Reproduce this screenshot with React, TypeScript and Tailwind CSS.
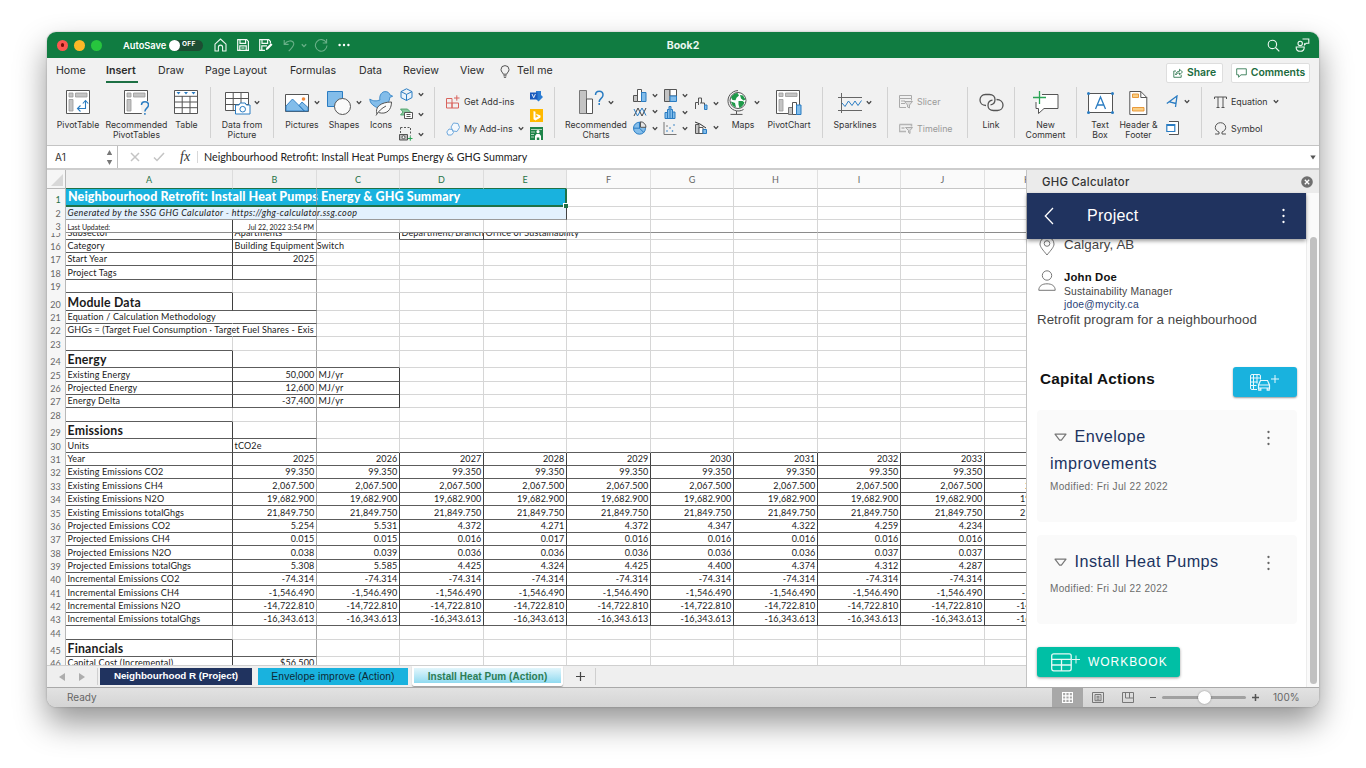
import React from "react";

const UI = "font-['Inter',sans-serif]";
const CELL = "font-['Lato',sans-serif]";
const HELV = "font-['Liberation_Sans',sans-serif]";

type Kids = { children?: React.ReactNode };

function Ic({ w, h, children, cls = "" }: Kids & { w: number; h: number; cls?: string }) {
  return (
    <svg width={w} height={h} viewBox={`0 0 ${w} ${h}`} fill="none" stroke="#555" strokeWidth="1" className={`block shrink-0 ${cls}`}>
      {children}
    </svg>
  );
}

function Chev({ color = "#444", cls = "" }: { color?: string; cls?: string }) {
  return (
    <Ic w={6} h={5} cls={cls}>
      <path d="M.8 1.2 3 3.6 5.2 1.2" stroke={color} strokeWidth="1.3" />
    </Ic>
  );
}

/* ---------- Title bar ---------- */

function TitleBar() {
  return (
    <div className={`grid h-[26px] shrink-0 grid-cols-[1fr_auto_1fr] items-center bg-[#107c41] text-white ${UI}`}>
      <div className="flex items-center">
        <div className="ml-[10px] flex gap-[6px]">
          <span className="flex size-[11px] items-center justify-center rounded-full bg-[#fc5650]"><span className="size-[3.5px] rounded-full bg-[#7a0c08]" /></span>
          <span className="size-[11px] rounded-full bg-[#fdb827]" />
          <span className="size-[11px] rounded-full bg-[#27c53e]" />
        </div>
        <span className="ml-[21px] w-[46px] pt-px text-[9.3px] font-semibold">AutoSave</span>
        <span className="flex h-[11px] w-[34px] items-center rounded-full bg-[#1d4d32] text-[6.5px] font-bold tracking-[0.3px]">
          <span className="mr-[2px] size-[11px] rounded-full bg-white" />OFF
        </span>
        <Ic w={13} h={14} cls="ml-[11px]">
          <path d="M1 6.2 6.5 1 12 6.2V13H8.6V9.2a2 2 0 0 0-4.2 0V13H1Z" stroke="#e9f5ee" strokeWidth="1.1" strokeLinejoin="round" />
        </Ic>
        <Ic w={12} h={12} cls="ml-[10px]">
          <path d="M.7.7h9l1.7 1.7v8.9H.7ZM3 .7v3.6h5.6V.7M2.8 11V6.9h6.4V11M4.3 9h3.2" stroke="#f2faf5" strokeWidth="1.2" />
        </Ic>
        <Ic w={14} h={12} cls="ml-[10px]">
          <path d="M6 11.3H.7V.7h9l1.7 1.7v2M3 .7v3.6h5.6V.7M2.8 11V6.9H8" stroke="#f2faf5" strokeWidth="1.2" />
          <path d="m6.8 11 .5-2.2 4.700-4.500 1.500 1.500-4.600 4.600Z" fill="#fff" stroke="none" />
        </Ic>
        <Ic w={12} h={13} cls="ml-[10px]">
          <path d="M1.2 1v4.400h4.400M1.500 5.200C4 1.200 9.600.8 10.700 4.200c.8 2.800-2 4.600-5 8" stroke="#69b088" strokeWidth="1.1" />
        </Ic>
        <Chev color="#69b088" cls="ml-[6px]" />
        <Ic w={14} h={14} cls="ml-[7px]">
          <path d="M12.6 1v4H8.7M12.300 4.600A5.800 5.800 0 1 0 13 7.600" stroke="#69b088" strokeWidth="1.1" />
        </Ic>
        <Ic w={12} h={4} cls="ml-[10px]">
          <g fill="#fff" stroke="none"><circle cx="1.600" cy="2" r="1.200" /><circle cx="6" cy="2" r="1.200" /><circle cx="10.400" cy="2" r="1.200" /></g>
        </Ic>
      </div>
      <div className="pt-px text-[10.5px] font-bold text-[#eaf6ef]">Book2</div>
      <div className="flex items-center justify-end pr-[9px]">
        <Ic w={13} h={13}>
          <circle cx="5.400" cy="5.400" r="4.200" stroke="#eef8f2" strokeWidth="1.1" /><path d="m8.500 8.500 3.800 3.800" stroke="#eef8f2" strokeWidth="1.1" />
        </Ic>
        <Ic w={15} h={14} cls="ml-[15px]">
          <g stroke="#eef8f2" strokeWidth="1.1"><circle cx="5.200" cy="5.400" r="2.200" /><path d="M1.200 9h8c.3 2.900-1.400 4.300-4 4.300S.9 11.900 1.200 9Z" /><path d="M7.500 1h6.300v4.300h-2.600L9.500 6.800V5.300" /></g>
        </Ic>
      </div>
    </div>
  );
}

/* ---------- Tab strip ---------- */

function RibbonTabs() {
  return (
    <div className={`flex h-[27px] shrink-0 items-center text-[10.6px] text-[#2b2b2b] ${UI}`}>
      <span className="mb-px ml-[9px] w-[50px]">Home</span>
      <span className="mr-[20px] mt-[3px] flex h-[20px] w-[32px] flex-col justify-between border-b-2 border-[#1d7044] font-semibold">Insert</span>
      <span className="mb-px w-[47px]">Draw</span>
      <span className="mb-px w-[85px]">Page Layout</span>
      <span className="mb-px w-[69px]">Formulas</span>
      <span className="mb-px w-[44px]">Data</span>
      <span className="mb-px w-[57px]">Review</span>
      <span className="mb-px w-[40px]">View</span>
      <Ic w={10} h={13}><path d="M3.200 9.200C3 7.500 1 6.800 1 4.600a4 4 0 0 1 8 0C9 6.800 7 7.500 6.800 9.200ZM3.400 10.800h3.200M3.900 12.300h2.200" stroke="#444" strokeWidth=".9" /></Ic>
      <span className="mb-px ml-[7px]">Tell me</span>
      <div className="ml-auto flex gap-[8px] pr-[9px] pt-[2px] text-[10.400px] font-semibold text-[#1c6b40]">
        <span className="flex h-[20px] w-[57px] items-center justify-center gap-[4px] rounded-[2px] border border-[#dedede] bg-white">
          <Ic w={10} h={10}><path d="M3 3H.8v6.300h7.400V6.800M2.700 7c.2-2.700 1.700-3.700 3.800-3.700V1.300l3 2.700-3 2.700V5C4.800 5 3.600 5.400 2.700 7Z" stroke="#1c6b40" strokeWidth=".8" /></Ic>
          Share
        </span>
        <span className="flex h-[20px] w-[79px] items-center justify-center gap-[4px] rounded-[2px] border border-[#dedede] bg-white">
          <Ic w={11} h={10}><path d="M.7.8h9.600v6H5L2.600 9.200V6.800H.7Z" stroke="#1c6b40" strokeWidth=".8" /></Ic>
          Comments
        </span>
      </div>
    </div>
  );
}

/* ---------- Ribbon icons ---------- */

const GRAY = "#c4c4c4";
const BLUE = "#83bdea";
const BSTROKE = "#2a7cc2";

const PivotBase = ({ children }: Kids) => (
  <Ic w={25} h={25}>
    <path d="M.5.500h23v23H.500Z" fill="#fff" />
    <path d="M3 3h4v4H3ZM9.500 3h11.500v4H9.500ZM3 9.500h4V21H3Z" fill={GRAY} stroke="#999" strokeWidth=".8" />
    {children}
  </Ic>
);

const PivotTableIcon = () => (
  <PivotBase><path d="M12 18.500h7.500V11M14.500 15.500l-3 3 3 3M16.800 13.500l2.700-3 2.700 3" stroke={BSTROKE} strokeWidth="1.1" /></PivotBase>
);
const RecPivotIcon = () => (
  <PivotBase>
    <path d="M16 11h9v14h-7z" fill="#f1f1f1" stroke="none" />
    <path d="M17.500 15c0-4.500 7-4.500 7 0 0 3.200-3.600 3-3.600 6.500M20.900 23v1.800" stroke={BSTROKE} strokeWidth="1.5" />
  </PivotBase>
);
const TableIcon = () => (
  <Ic w={25} h={25}>
    <path d="M.5.500h23v23H.500Z" fill="#fff" />
    <path d="M.5 6.300h23M.5 12h23M.5 17.700h23M8.200 6v17.500M16 6v17.500" />
    <path d="M2.500 2h4L4.500 4.500ZM10 2h4L12 4.500ZM17.500 2h4l-2 2.500Z" fill="#2a7cc2" stroke="none" />
  </Ic>
);
const DataPicIcon = () => (
  <Ic w={26} h={24}>
    <path d="M.5 1.500h23v18H.500ZM.5 7.500h23M.5 13.500h23M8.200 1.500v18M16 1.500v18" fill="#fff" />
    <path d="M10.500 14h3.500l1.200-2h5l1.200 2h3.600v9H10.500Z" fill="#fff" stroke={BSTROKE} /><circle cx="17.700" cy="18.200" r="2.800" stroke={BSTROKE} />
  </Ic>
);
const PicturesIcon = () => (
  <Ic w={24} h={18}>
    <path d="M.5.500h23v17H.500Z" fill="#fff" />
    <path d="M1 17V12l6.500-7 12 12ZM14 11.500l3-3.500 6 5.500V17h-4Z" fill={BLUE} stroke={BSTROKE} strokeWidth=".9" /><circle cx="18.500" cy="5" r="1.800" fill="#f0883a" stroke="none" />
  </Ic>
);
const ShapesIcon = () => (
  <Ic w={24} h={24}><path d="M.5.500h15v15H.500Z" fill={BLUE} stroke={BSTROKE} /><circle cx="15.500" cy="15.500" r="8" fill="#fafafa" stroke="#555" /></Ic>
);
const IconsIcon = () => (
  <Ic w={24} h={26}>
    <path d="M.8 9c3 2.300 7.200 2.300 10.200.8C10 7.500 11.500 2 15.800 1.600c2.800-.2 4.700 1.200 5 3.200l2.900 1.400-3 1.300c0 2-.6 3.500-1.700 5.500-3 5-9 6.500-13 3.500C2.500 14.500.8 12 .8 9Z" fill={BLUE} stroke={BSTROKE} strokeWidth=".8" />
    <path d="M8 24C5.500 17 12 12 22.500 12c0 8-5 13-13 10.500M7 25.500c2-4 6-7.500 10-9.500" fill="#fafafa" />
  </Ic>
);
const RecChartsIcon = () => (
  <Ic w={25} h={25}>
    <path d="M.5.500h7v23h-7Z" fill={GRAY} stroke="#777" /><path d="M7.500 9h6v14.500h-6Z" fill="#fff" />
    <path d="M16.500 5c0-5 7.500-5 7.500 0 0 3.500-3.800 3.200-3.800 7M20.200 13v2" stroke={BSTROKE} strokeWidth="1.500" />
  </Ic>
);
const MapsIcon = () => (
  <Ic w={22} h={25}>
    <circle cx="12" cy="10.500" r="8" fill="#fff" />
    <path d="M5 7.500C6.500 4.500 9 3.200 11.500 3l1.500 2.500-2.500 2.300-1 2.400-3-.2ZM14 5l3 .500 2.500 4-2 1L15 8.500ZM12.500 11l4 0 2 1.500c-1 3-3 4.800-5 5.500l-1-3.500ZM5 11.500l4 1.500 1 4.500C7 16.500 5.500 14.500 5 11.500Z" fill="#1f9a4a" stroke="none" />
    <path d="M12 .600A10.200 10.200 0 1 0 17.500 19.500M10.500 21V24M4.500 24.400h12" />
  </Ic>
);
const PivotChartIcon = () => (
  <Ic w={26} h={25}>
    <path d="M.5.500h23v23H.500Z" fill="#fff" /><path d="M3 3h4v3.500H3ZM9.500 3H21v3.500H9.500ZM3 9.500h4V21H3Z" fill={GRAY} stroke="#999" strokeWidth=".8" />
    <path d="M12.500 17.500h4v7h-4Z" fill={GRAY} stroke="#777" /><path d="M16.500 12.500h4v12h-4Z" fill="#fff" /><path d="M20.500 15h4.500v9.500h-4.500Z" fill={BLUE} stroke={BSTROKE} />
  </Ic>
);
const SparkIcon = () => (
  <Ic w={24} h={20}><path d="M0 4.500h24M0 17.500h24M3.500 0v20" stroke="#666" /><path d="m4 10 3 3.500L10.500 8l3.500 4.500L17 8l3 4.500 3.500-5" stroke={BSTROKE} /></Ic>
);
const LinkIcon = () => (
  <Ic w={25} h={19}>
    <path d="M7 12.500C3 12.500 1 10 1 7s2-5.500 5.500-5.500h4c3.500 0 5.500 2.500 5.500 5 0 3-2 5-4.500 5.300" strokeWidth="1.300" /><path d="M17.500 6.500c4 0 6.500 2.500 6.500 5.500s-2 5.500-5.500 5.500h-4C11 17.500 9 15 9 12.500c0-3 2-5 4.500-5.300" strokeWidth="1.300" />
  </Ic>
);
const CommentIcon = () => (
  <Ic w={26} h={24}><path d="M9 3.500h16v14H11l-5.500 5v-5H3V11" fill="#fff" /><path d="M0 6.500h13M6.500 0v13" stroke="#2aa455" strokeWidth="1.300" /></Ic>
);
const TextBoxIcon = () => (
  <Ic w={27} h={22}>
    <path d="M1.500 1.500h24v19h-24Z" fill="#fff" /><path d="M8.500 17 13.500 5l5 12M10.300 13h6.400" stroke={BSTROKE} strokeWidth="1.300" />
    <g fill={BSTROKE} stroke="none"><circle cx="1.500" cy="1.500" r="1.500" /><circle cx="25.500" cy="1.500" r="1.500" /><circle cx="1.500" cy="20.500" r="1.500" /><circle cx="25.500" cy="20.500" r="1.500" /></g>
  </Ic>
);
const HeaderIcon = () => (
  <Ic w={19} h={24}>
    <path d="M.8.500h11l6 6v17H.800Z" fill="#fff" /><path d="M11.800.500v6h6" />
    <path d="M3.500 3h6v3.500h-6ZM3.500 16.500H15V20H3.500Z" fill="#f9cf86" stroke="#e8912d" strokeWidth=".9" />
  </Ic>
);

const cubeI = <Ic w={13} h={13}><path d="M6.500.800 12 3.600v6l-5.500 2.900L1 9.600v-6ZM1 3.600l5.500 2.800L12 3.600M6.500 6.400v6" fill="#e9f3fb" stroke={BSTROKE} /></Ic>;
const smartI = <Ic w={13} h={12}><path d="M.5 1h7l3 3-3 3h-7l2.500-3Z" fill="#8cc9a0" stroke="#3b9a5c" strokeWidth=".8" /><path d="M4.500 4.500h8v6h-8ZM6.500 6.500h4M6.500 8.500h4" fill="#fff" /></Ic>;
const shotI = <Ic w={14} h={14}><path d="M1.500.500h10v8" strokeDasharray="2 1.500" /><path d="M1.500.500v6" strokeDasharray="2 1.500" /><path d="M.5 7.500h8V13h-8Z" fill="#bbb" /><circle cx="4.500" cy="10.200" r="1.500" fill="#fff" /><path d="M9 11.500h4.500M11.300 9.200v4.500" stroke="#2aa455" /></Ic>;
const visioI = <Ic w={13} h={13}><path d="M6 1h5v4l2 2-4.500 4.500L6 9Z" fill="#2b7cd3" stroke="none" /><path d="M0 2.500h7.500v7H0Z" fill="#185abd" stroke="none" /><path d="m2 4 1.700 3.700L5.400 4" stroke="#fff" strokeWidth=".9" /></Ic>;
const bingI = <Ic w={13} h={13}><path d="M0 0h13v13H0Z" fill="#ffb900" stroke="none" /><path d="M3.500 2 5.500 2.800v6l3-1.600L6.800 6.500 6 4.800l4.500 1.700v2L5.500 11.500l-2-1.200Z" fill="#fff" stroke="none" /></Ic>;
const peopleI = <Ic w={13} h={13}><path d="M0 0h13v13H0Z" fill="#1e8449" stroke="none" /><path d="M1 2.500h11M1 5h4M1 7.500h3M1 10h3" stroke="#cfe9d8" strokeWidth=".8" /><circle cx="8" cy="4.700" r="1.600" fill="#fff" stroke="none" /><path d="M5 13V9l1.500-2h3L11 9v4H9.300v-2.500H6.800V13Z" fill="#fff" stroke="none" /></Ic>;
const barI = <Ic w={14} h={13}><path d="M.5 6.500h4v6h-4Z" fill={GRAY} /><path d="M4.500.500h4v12h-4Z" fill="#fff" /><path d="M8.500 3.500h4.500v9H8.500Z" fill={BLUE} stroke={BSTROKE} /></Ic>;
const lineI = <Ic w={14} h={12}><path d="m1 10 4-8 4 8 4-8" stroke="#444" /><path d="m1 3 3.500 7L9 2l4 7.500" stroke={BSTROKE} /></Ic>;
const pieI = <Ic w={14} h={14}><circle cx="6.500" cy="7.200" r="6" fill={BLUE} stroke={BSTROKE} /><path d="M6.500 7.200V1.200M6.500 7.200h-6M6.500 7.200l4.300 4.300" stroke={BSTROKE} /><path d="M7.500.800a5.500 5.500 0 0 1 5.500 5.500H7.500Z" fill="#e5e5e5" /></Ic>;
const treeI = <Ic w={13} h={13}><path d="M.5.500h5.500v12H.500Z" fill={GRAY} /><path d="M6 .500h6.500V7H6Z" fill="#fff" /><path d="M6 7h6.500v5.500H6Z" fill={BLUE} stroke={BSTROKE} /></Ic>;
const histI = <Ic w={12} h={13}><path d="M1 12.500V6.500h2.500V3.500H5V.5h2v3h1.500v2.500H11v6.500ZM3.500 6v6.500M6 3v9.500M8.500 6v6.500" fill={BLUE} stroke={BSTROKE} /></Ic>;
const scatI = <Ic w={14} h={13}><path d="M1 0v12.500h12.500" stroke="#777" /><g fill={BSTROKE} stroke="none"><circle cx="4" cy="9" r=".8" /><circle cx="7" cy="6" r=".8" /><circle cx="11" cy="3" r=".8" /><circle cx="9.500" cy="9" r=".8" /></g><circle cx="4" cy="4" r=".7" fill="#555" stroke="none" /></Ic>;
const fallI = <Ic w={14} h={13}><path d="M1.500 12V5.500h3V1h3v5H6M4.500 5.500V8M7.500 1v5h3V8" /><path d="M10.500 8h2.500v4.500h-2.500Z" fill={BLUE} stroke={BSTROKE} /></Ic>;
const comboI = <Ic w={14} h={13}><path d="M1.500 3.500h3.500v9H1.500Z" fill={GRAY} /><path d="M5 6.500h4v6H5Z" fill="#fff" /><path d="M9 8.500h3.500v4H9Z" fill={BLUE} stroke={BSTROKE} /><path d="m1 1 5 2 6 4" stroke="#333" /></Ic>;

function Big({ w, icon, chev, lines, gap = "gap-[6px]" }: { w: string; icon: React.ReactNode; chev?: boolean; lines: string[]; gap?: string }) {
  return (
    <div className={`flex shrink-0 flex-col items-center ${w}`}>
      <div className={`flex h-[31px] items-center ${gap}`}>
        {icon}
        {chev && <Chev />}
      </div>
      <div className="mt-[2px] whitespace-nowrap text-center text-[8.700px] leading-[10px]">
        {lines.map((l) => <div key={l}>{l}</div>)}
      </div>
    </div>
  );
}

const Sep = () => <div className="h-[51px] w-px shrink-0 bg-[#d2d2d2]" />;

function Small({ icon, chev = true }: { icon: React.ReactNode; chev?: boolean }) {
  return <div className="flex items-center gap-[5px]"><span className="flex w-[14px] justify-center">{icon}</span>{chev && <Chev />}</div>;
}

function Line({ icon, text, chev, cls = "" }: { icon: React.ReactNode; text: string; chev?: boolean; cls?: string }) {
  return (
    <div className={`flex items-center whitespace-nowrap text-[8.900px] ${cls}`}>
      <span className="mr-[4px] flex w-[14px] justify-center">{icon}</span>{text}{chev && <Chev cls="ml-[5px]" />}
    </div>
  );
}

function Ribbon() {
  return (
    <div className={`flex h-[60px] shrink-0 items-start pt-[2px] text-[#333] ${UI}`}>
      <div className="flex w-[163px] pl-[6px]">
        <Big w="w-[50px]" icon={<PivotTableIcon />} lines={["PivotTable"]} />
        <Big w="w-[67px]" icon={<RecPivotIcon />} lines={["Recommended", "PivotTables"]} />
        <Big w="w-[33px]" icon={<TableIcon />} lines={["Table"]} />
      </div>
      <Sep />
      <Big w="w-[62px]" icon={<DataPicIcon />} chev gap="gap-[3px]" lines={["Data from", "Picture"]} />
      <Sep />
      <div className="flex w-[160px] pl-[7px]">
        <Big w="w-[42px]" icon={<PicturesIcon />} chev gap="gap-[5px]" lines={["Pictures"]} />
        <Big w="w-[42px]" icon={<ShapesIcon />} chev gap="gap-[5px]" lines={["Shapes"]} />
        <Big w="w-[32px]" icon={<IconsIcon />} lines={["Icons"]} />
        <div className="flex h-[54px] flex-col justify-between pl-[2px] pt-[1px]">
          <Small icon={cubeI} /><Small icon={smartI} /><Small icon={shotI} />
        </div>
      </div>
      <Sep />
      <div className="flex w-[119px] pl-[11px]">
        <div className="w-[84px]">
          <Line cls="h-[28px] pt-px" icon={<Ic w={14} h={14}><path d="M.5 3.500h5.500V13H.500ZM.5 8h12v5H6V8M8 3h5.500M10.800.300v5.400" stroke="#d9635c" /></Ic>} text="Get Add-ins" />
          <Line cls="h-[27px]" icon={<Ic w={14} h={14}><path d="m7.500 1 4.500.500 1.500 4L11 9.500 7 9 5 5ZM3 7l3 .500 1.500 3-2 2.500H2L.8 10Z" fill="#f3f8fd" stroke="#6fa8dc" /></Ic>} text="My Add-ins" chev />
        </div>
        <div className="flex h-[53px] flex-col justify-between pt-[3px]">{visioI}{bingI}{peopleI}</div>
      </div>
      <Sep />
      <div className="flex w-[267px] pl-[5px]">
        <Big w="w-[72px]" icon={<RecChartsIcon />} chev gap="gap-[4px]" lines={["Recommended", "Charts"]} />
        <div className="flex h-[48px] w-[29px] flex-col justify-between pl-[1px] pt-[2px]"><Small icon={barI} /><Small icon={lineI} /><Small icon={pieI} /></div>
        <div className="flex h-[48px] w-[30px] flex-col justify-between pl-[2px] pt-[2px]"><Small icon={treeI} /><Small icon={histI} /><Small icon={scatI} /></div>
        <div className="flex h-[47px] w-[31px] flex-col justify-between pl-[3px] pt-[10px]"><Small icon={fallI} /><Small icon={comboI} /></div>
        <Big w="w-[42px]" icon={<MapsIcon />} chev lines={["Maps"]} />
        <Big w="w-[50px]" icon={<PivotChartIcon />} lines={["PivotChart"]} />
      </div>
      <Sep />
      <Big w="w-[64px]" icon={<SparkIcon />} chev gap="gap-[4px]" lines={["Sparklines"]} />
      <Sep />
      <div className="w-[79px] pl-[11px] text-[#9a9a9a]">
        <Line cls="h-[28px] pt-px" icon={<Ic w={14} h={14}><path d="M.5.500h12v3h-12ZM.5 3.500v9H7M2 6h4M2 8.500h4M12.500 3.500v2" stroke="#aaa" /><path d="M5.500 6.500h8L10.500 10v3l-2-1v-2Z" fill="#ddd" stroke="#aaa" /></Ic>} text="Slicer" />
        <Line cls="h-[27px]" icon={<Ic w={14} h={11}><path d="M.5 1.500h12v2M.5 1.500v7H7M2.500 5h3" stroke="#b5b5b5" strokeWidth="1.500" /><path d="M6.500 4.500h7L11 7.500v3L9.500 9.500v-2Z" fill="#ddd" stroke="#aaa" /></Ic>} text="Timeline" />
      </div>
      <Sep />
      <Big w="w-[46px]" icon={<LinkIcon />} lines={["Link"]} />
      <Sep />
      <Big w="w-[61px]" icon={<CommentIcon />} lines={["New", "Comment"]} />
      <Sep />
      <div className="flex w-[124px] pl-[6px]">
        <Big w="w-[34px]" icon={<TextBoxIcon />} lines={["Text", "Box"]} />
        <Big w="w-[43px]" icon={<HeaderIcon />} lines={["Header &", "Footer"]} />
        <div className="flex h-[48px] flex-col justify-between pl-[5px] pt-[8px]">
          <Small icon={<Ic w={13} h={13}><path d="M.8 8.500 11 1 9.500 12M3.500 6.800 10 8.500" stroke={BSTROKE} strokeWidth="1.300" /></Ic>} />
          <Small chev={false} icon={<Ic w={13} h={14}><path d="M3 .500h9.500v13H3" fill="#fff" /><path d="M.8 3.500h8v7h-8ZM.8 4.500h8" fill="#fff" stroke={BSTROKE} strokeWidth="1.200" /></Ic>} />
        </div>
      </div>
      <Sep />
      <div className="pl-[11px]">
        <Line cls="h-[28px] pt-px" icon={<Ic w={13} h={12}><path d="M.5 3V1h12v2M4 1v10.500M2.500 11.500h3M9 1v10.500M7.500 11.500h3" /></Ic>} text="Equation" chev />
        <Line cls="h-[27px]" icon={<Ic w={13} h={13}><path d="M1 12h4V10C2.500 9 1.300 7.500 1.300 5.500a5.200 4.800 0 0 1 10.400 0C11.700 7.500 10.500 9 8 10v2h4" /></Ic>} text="Symbol" />
      </div>
    </div>
  );
}

/* ---------- Formula bar ---------- */

function FormulaBar() {
  return (
    <div className="flex h-[25px] shrink-0 items-center border-b-2 border-t border-b-[#cdcdcd] border-t-[#c4c4c4] bg-white">
      <div className={`flex h-full w-[71px] items-center justify-between border-r border-[#bdbdbd] pl-[8px] pr-[4px] text-[10px] tracking-[0.200px] text-[#333] ${UI}`}>
        A1
        <Ic w={7} h={15}><path d="M3.500 0 6.200 5H.800ZM3.500 15 6.200 10H.800Z" fill="#777" stroke="none" /></Ic>
      </div>
      <Ic w={10} h={10} cls="ml-[12px]"><path d="m1 1 8 8M9 1 1 9" stroke="#c4c4c4" strokeWidth="1.500" /></Ic>
      <Ic w={12} h={10} cls="ml-[13px]"><path d="m1 5.500 3 3 7-7.500" stroke="#c4c4c4" strokeWidth="1.500" /></Ic>
      <span className="ml-[15px] w-[17px] font-['Liberation_Serif',serif] text-[14px] italic leading-none text-[#333]">fx</span>
      <span className="h-[12px] w-px bg-[#d8d8d8]" />
      <span className={`ml-[6px] whitespace-nowrap text-[10.700px] text-[#222] ${CELL}`}>Neighbourhood Retrofit: Install Heat Pumps Energy &amp; GHG Summary</span>
      <Ic w={6} h={5} cls="ml-auto mr-[3px]"><path d="M.3.500h5.400L3 4.500Z" fill="#555" stroke="none" /></Ic>
    </div>
  );
}

/* ---------- Sheet ---------- */

const COLS = "ABCDEFGHIJK".split("");
const COL_W = [167, 84, 83, 84, 83, 84, 83, 84, 83, 84, 85];
const DARK = "#5c5c5c";
const LITE = "#d6d6d6";
const FREEZE = "#a3a3a3";

type Row = { n: number; h: number; t?: string[]; head?: boolean; dr?: number[]; db?: number; hide?: number[]; clip?: boolean };

const same = (label: string, v: string) => [label, ...Array(10).fill(v)];
const ALL = [0, 2, 3, 4, 5, 6, 7, 8, 9];

const ROWS: Row[] = [
  { n: 15, h: 7, t: ["Subsector", "Apartments", "", "Department/Branch", "Office of Sustainability"], dr: [0, 2, 3], db: 2, clip: true },
  { n: 16, h: 13, t: ["Category", "Building Equipment Switch"], dr: [0], db: 2 },
  { n: 17, h: 13, t: ["Start Year", "2025"], dr: [0], db: 2 },
  { n: 18, h: 14, t: ["Project Tags"], dr: [0], db: 2 },
  { n: 19, h: 13, db: 1 },
  { n: 20, h: 18, t: ["Module Data"], head: true, dr: [0], db: 2 },
  { n: 21, h: 13, t: ["Equation / Calculation Methodology"], db: 2, hide: [0] },
  { n: 22, h: 13, t: ["GHGs = (Target Fuel Consumption · Target Fuel Shares - Exis"], db: 2, hide: [0] },
  { n: 23, h: 14, db: 1 },
  { n: 24, h: 17, t: ["Energy"], head: true, dr: [0], db: 3 },
  { n: 25, h: 14, t: ["Existing Energy", "50,000", "MJ/yr"], dr: [0, 2], db: 3 },
  { n: 26, h: 13, t: ["Projected Energy", "12,600", "MJ/yr"], dr: [0, 2], db: 3 },
  { n: 27, h: 13, t: ["Energy Delta", "-37,400", "MJ/yr"], dr: [0, 2], db: 3 },
  { n: 28, h: 14, db: 1 },
  { n: 29, h: 17, t: ["Emissions"], head: true, dr: [0], db: 2 },
  { n: 30, h: 14, t: ["Units", "tCO2e"], dr: [0], db: 11 },
  { n: 31, h: 13, t: ["Year", "2025", "2026", "2027", "2028", "2029", "2030", "2031", "2032", "2033"], dr: ALL, db: 11 },
  { n: 32, h: 13, t: same("Existing Emissions CO2", "99.350"), dr: ALL, db: 11 },
  { n: 33, h: 14, t: same("Existing Emissions CH4", "2,067.500"), dr: ALL, db: 11 },
  { n: 34, h: 13, t: same("Existing Emissions N2O", "19,682.900"), dr: ALL, db: 11 },
  { n: 35, h: 14, t: same("Existing Emissions totalGhgs", "21,849.750"), dr: ALL, db: 11 },
  { n: 36, h: 13, t: ["Projected Emissions CO2", "5.254", "5.531", "4.372", "4.271", "4.372", "4.347", "4.322", "4.259", "4.234"], dr: ALL, db: 11 },
  { n: 37, h: 13, t: ["Projected Emissions CH4", "0.015", "0.015", "0.016", "0.017", "0.016", "0.016", "0.016", "0.016", "0.016"], dr: ALL, db: 11 },
  { n: 38, h: 14, t: ["Projected Emissions N2O", "0.038", "0.039", "0.036", "0.036", "0.036", "0.036", "0.036", "0.037", "0.037"], dr: ALL, db: 11 },
  { n: 39, h: 13, t: ["Projected Emissions totalGhgs", "5.308", "5.585", "4.425", "4.324", "4.425", "4.400", "4.374", "4.312", "4.287"], dr: ALL, db: 11 },
  { n: 40, h: 13, t: same("Incremental Emissions CO2", "-74.314"), dr: ALL, db: 11 },
  { n: 41, h: 14, t: same("Incremental Emissions CH4", "-1,546.490"), dr: ALL, db: 11 },
  { n: 42, h: 13, t: same("Incremental Emissions N2O", "-14,722.810"), dr: ALL, db: 11 },
  { n: 43, h: 13, t: same("Incremental Emissions totalGhgs", "-16,343.613"), dr: ALL, db: 11 },
  { n: 44, h: 14, db: 1 },
  { n: 45, h: 17, t: ["Financials"], head: true, dr: [0], db: 2 },
  { n: 46, h: 13, t: ["Capital Cost (Incremental)", "$56,500"], dr: [0], db: 2 },
];

function RowNum({ n, green }: { n: number; green?: boolean }) {
  return (
    <div className={`flex w-[19px] shrink-0 items-end justify-end border-r border-[#b8b8b8] bg-[#f6f6f6] pr-[4px] text-[9px] leading-[12px] tracking-[0.200px] ${CELL} ${green ? "pb-px text-[#1f7246]" : "text-[#666]"}`}>{n}</div>
  );
}

function SheetRow({ r }: { r: Row }) {
  return (
    <div className={`flex shrink-0 ${r.clip ? "overflow-hidden" : ""}`} style={{ height: r.h }}>
      <RowNum n={r.n} />
      {COLS.map((c, i) => {
        const v = r.t?.[i] ?? "";
        const num = /^[-$]?[\d.,]+$/.test(v);
        const right = r.hide?.includes(i) ? "transparent" : i === 1 ? FREEZE : r.dr?.includes(i) ? "#3f3f3f" : LITE;
        return (
          <div
            key={c}
            className={`flex shrink-0 items-end whitespace-nowrap border-b border-r pl-[1.500px] pr-[1.500px] text-[#1a1a1a] ${CELL} ${num ? "justify-end" : ""} ${r.clip && i === 3 ? "overflow-hidden" : ""} ${r.head ? "text-[12.300px] font-bold leading-[15px] tracking-[0.200px]" : "text-[9px] leading-[12px] tracking-[0.160px]"}`}
            style={{ width: COL_W[i], borderBottomColor: i < (r.db ?? 0) || (r.clip && (i === 3 || i === 4)) ? DARK : LITE, borderRightColor: right }}
          >
            {v}
          </div>
        );
      })}
    </div>
  );
}

function Fillers({ from, bottom = "border-[#d6d6d6]" }: { from: number; bottom?: string }) {
  return <>{COLS.slice(from).map((c, i) => <div key={c} className={`shrink-0 border-b border-r border-r-[#d6d6d6] ${bottom}`} style={{ width: COL_W[i + from] }} />)}</>;
}

function Sheet() {
  return (
    <div className="flex min-h-0 w-[979px] flex-1 flex-col overflow-hidden bg-white">
      <div className={`flex h-[19px] shrink-0 text-[9px] ${CELL}`}>
        <div className="flex w-[19px] shrink-0 items-end justify-end border-b border-r border-[#b8b8b8] bg-[#f6f6f6] pb-[2px] pr-[2px]">
          <Ic w={12} h={12}><path d="M12 0v12H0Z" fill="#d8d8d8" stroke="none" /></Ic>
        </div>
        {COLS.map((c, i) => (
          <div key={c} className={`flex shrink-0 items-center justify-center border-b border-r pt-px ${i < 5 ? "border-b-[#1f7246] border-r-[#dcdcdc] bg-[#f0f0f0] text-[#1f7246]" : "border-b-[#c6c6c6] border-r-[#e0e0e0] bg-[#fafafa] text-[#666]"}`} style={{ width: COL_W[i] }}>{c}</div>
        ))}
      </div>
      <div className="flex h-[18px] shrink-0">
        <RowNum n={1} green />
        <div className={`relative flex w-[501px] shrink-0 items-center whitespace-nowrap border-b-2 border-r-2 border-[#1f7246] bg-[#19b2de] pl-[2px] pt-px text-[12.500px] font-black tracking-[0.110px] text-white ${CELL}`}>
          Neighbourhood Retrofit: Install Heat Pumps Energy &amp; GHG Summary
          <span className="absolute left-[250px] top-0 h-[16px] w-px bg-[#7f9fae]" />
          <span className="absolute -bottom-[3px] -right-[3px] z-10 size-[5px] border-l border-t border-white bg-[#1f7246]" />
        </div>
        <Fillers from={5} />
      </div>
      <div className="flex h-[13px] shrink-0">
        <RowNum n={2} />
        <div className={`relative flex w-[501px] shrink-0 items-center whitespace-nowrap border-b border-r border-b-[#9a9a9a] border-r-[#444] bg-[#e3f1fd] pl-[1.500px] text-[9px] italic tracking-[0.370px] text-[#222] ${CELL}`}>
          Generated by the SSG GHG Calculator - https://ghg-calculator.ssg.coop
          <span className="absolute left-[250px] top-0 h-[13px] w-px bg-[#a3a3a3]" />
        </div>
        <Fillers from={5} />
      </div>
      <div className={`flex h-[13px] shrink-0 text-[7px] text-[#222] ${CELL}`}>
        <RowNum n={3} />
        <div className="flex w-[167px] shrink-0 items-center border-b border-r border-b-[#8c8c8c] border-r-[#3f3f3f] pl-[1.500px] pt-[2px]">Last Updated:</div>
        <div className="flex w-[84px] shrink-0 items-center justify-end whitespace-nowrap border-b border-r border-b-[#8c8c8c] border-r-[#a3a3a3] pr-[2px] pt-[2px]">Jul 22, 2022 3:54 PM</div>
        <Fillers from={2} bottom="border-b-[#8c8c8c]" />
      </div>
      {ROWS.map((r) => <SheetRow key={r.n} r={r} />)}
    </div>
  );
}

function SheetTabs() {
  return (
    <div className={`flex h-[22px] shrink-0 items-center border-t border-[#cfcfcf] bg-[#efefef] text-[9.800px] ${HELV}`}>
      <Ic w={28} h={10} cls="ml-[12px]"><path d="M6 1v8L0 5ZM20 1v8l6-4Z" fill="#adadad" stroke="none" /></Ic>
      <span className="ml-[10px] h-[17px] w-px bg-[#d0d0d0]" />
      <span className="ml-[2px] mr-[6px] flex h-[17px] w-[152px] items-center justify-center bg-[#20335f] font-bold text-white"><span className="tracking-[-0.040px]">Neighbourhood R (Project)</span></span>
      <span className="flex h-[17px] w-[150px] items-center justify-center bg-[#19b2de] text-[10.300px] tracking-[0.100px] text-[#0d2a36]">Envelope improve (Action)</span>
      <span className="mb-[2px] ml-[4px] flex h-[20px] w-[151px] items-center justify-center rounded-b-[2px] bg-white shadow-[0_1px_1px_rgba(0,0,0,0.350)]">
        <span className="flex h-[15px] w-[147px] items-center justify-center bg-linear-to-b from-[#e2f6fc] to-[#8fdaf0] pt-px text-[10px] font-bold tracking-[0.050px] text-[#2c7d55]">Install Heat Pum (Action)</span>
      </span>
      <Ic w={9} h={9} cls="ml-[13px]"><path d="M4.500 0v9M0 4.500h9" stroke="#444" strokeWidth="1.200" /></Ic>
      <span className="ml-[10px] h-[17px] w-px bg-[#cfcfcf]" />
    </div>
  );
}

/* ---------- Add-in pane ---------- */

const Dots = ({ color }: { color: string }) => (
  <Ic w={3} h={16}><g fill={color} stroke="none"><circle cx="1.500" cy="2" r="1.150" /><circle cx="1.500" cy="8" r="1.150" /><circle cx="1.500" cy="14" r="1.150" /></g></Ic>
);

const Tri = () => <Ic w={13} h={9} cls="mr-[8px] inline-block"><path d="M1 1.200h11L7.400 7.200H5.600Z" stroke="#777" strokeWidth="1.200" strokeLinejoin="round" /></Ic>;

function Card({ title, h, gap }: { title: React.ReactNode; h: string; gap: string }) {
  return (
    <div className={`flex rounded-[4px] bg-[#fafafa] pl-[13px] pr-[27px] pt-[13px] ${h}`}>
      <div className="flex-1">
        <div className="text-[16.200px] leading-[27px] tracking-[0.460px] text-[#20335f]"><span className="inline-block w-[3.500px]" /><Tri />{title}</div>
        <div className={`text-[10px] leading-[12px] tracking-[0.340px] text-[#6b6b6b] ${gap}`}>Modified: Fri Jul 22 2022</div>
      </div>
      <div className="pt-[7px]"><Dots color="#666" /></div>
    </div>
  );
}

function Pane() {
  return (
    <div className="flex w-[293px] shrink-0 flex-col border-l border-[#c4c4c4] bg-white">
      <div className={`flex h-[23px] shrink-0 items-center justify-between bg-[#ebebeb] pl-[15px] pr-[6px] pt-px text-[11.300px] font-medium tracking-[0.300px] text-[#333] ${UI}`}>
        GHG Calculator
        <Ic w={12} h={12}><circle cx="6" cy="6" r="5.800" fill="#6f6f6f" stroke="none" /><path d="m3.800 3.800 4.400 4.400M8.200 3.800 3.800 8.200" stroke="#fff" strokeWidth="1.300" /></Ic>
      </div>
      <div className={`flex min-h-0 flex-1 ${HELV}`}>
        <div className="flex w-[279px] flex-col">
          <div className="z-10 flex h-[46px] shrink-0 items-center bg-[#20335f] pl-[17px] pr-[21px] text-[16px] text-white shadow-[0_2px_4px_rgba(0,0,0,0.400)]">
            <Ic w={10} h={18}><path d="M9 1 1.300 9 9 17" stroke="#fff" strokeWidth="1.300" /></Ic>
            <span className="ml-[33px] flex-1 tracking-[0.250px]">Project</span>
            <Dots color="#fff" />
          </div>
          <div className="flex min-h-0 flex-1 flex-col pl-[10px] pr-[9px] text-[#444]">
            <div className="-mt-[3px] flex h-[20px] items-center">
              <Ic w={16} h={20} cls="ml-[2px]"><path d="M8 19C4 14 1 11 1 8a7 7 0 0 1 14 0c0 3-3 6-7 11Z" stroke="#777" /><circle cx="8" cy="7.500" r="2.800" stroke="#777" /></Ic>
              <span className="ml-[9px] pb-[3px] text-[13.300px] tracking-[0.100px]">Calgary, AB</span>
            </div>
            <div className="mt-[14px] flex">
              <Ic w={18} h={21} cls="ml-[1px]"><circle cx="9" cy="5.500" r="4.700" stroke="#777" /><path d="M.8 20.300c0-4.500 3.500-6.500 8.200-6.500s8.200 2 8.200 6.500Z" stroke="#777" /></Ic>
              <div className="ml-[8px]">
                <div className="text-[11.300px] font-bold leading-[14px] tracking-[0.200px] text-[#111]">John Doe</div>
                <div className="mt-px text-[10.300px] leading-[14px] tracking-[0.200px]">Sustainability Manager</div>
                <div className="text-[10.300px] leading-[12px] tracking-[0.200px] text-[#2b3f78]">jdoe@mycity.ca</div>
              </div>
            </div>
            <div className="mt-px whitespace-nowrap text-[13.300px] leading-[16px] tracking-[0.030px]">Retrofit program for a neighbourhood</div>
            <div className="mt-[39px] flex h-[31px] items-start justify-between">
              <span className="pl-[3px] pt-[3px] text-[15.300px] font-bold leading-[18px] tracking-[0.280px] text-[#111]">Capital Actions</span>
              <span className="flex h-[30px] w-[64px] items-center justify-center rounded-[3px] bg-[#19b2de] pr-[3px] shadow-[0_1px_2px_rgba(0,0,0,0.400)]">
                <Ic w={30} h={18}>
                  <g stroke="#e8f8fd"><path d="M8 16.500H3A1.500 1.500 0 0 1 1.500 15V3A1.500 1.500 0 0 1 3 1.500h7A1.500 1.500 0 0 1 11.500 3v3.500M4.500 1.500v15M8 1.500v9M1.500 5h10M1.500 9h7M1.500 12.500h6" /><path d="M9.500 16V12l2-4.500h7l2 4.500V16M9.500 12h11M9.500 15h11M9.800 15v2.200h2V15M18.200 15v2.200h2V15" strokeWidth="1.200" /><path d="M26 2v8M22 6h8" /></g>
                </Ic>
              </span>
            </div>
            <div className="mt-[12px] flex flex-col gap-[13px]">
              <Card h="h-[112px]" gap="mt-[4px]" title={<>Envelope<br />improvements</>} />
              <Card h="h-[89px]" gap="mt-[8px]" title="Install Heat Pumps" />
            </div>
            <div className="mt-[23px] flex h-[30px] w-[143px] shrink-0 items-center rounded-[3px] bg-[#00bfa5] pl-[14px] text-[12px] tracking-[0.950px] text-white shadow-[0_1px_3px_rgba(0,0,0,0.400)]">
              <Ic w={30} h={19} cls="mr-[7px]">
                <g stroke="#e6faf6" strokeWidth="1.300"><rect x=".7" y=".8" width="19.500" height="17" rx="2" /><path d="M.7 6.300h19.500M.7 12h19.500M10.500 6.300v11.500" /><path d="M25 2.500v8M21 6.500h8" strokeWidth="1" /></g>
              </Ic>
              WORKBOOK
            </div>
          </div>
        </div>
        <div className="flex flex-1 flex-col border-l border-[#ececec] bg-[#fafafa] pl-[3px] pt-[44px]">
          <div className="h-[447px] w-[7px] rounded-full bg-[#c1c1c1]" />
        </div>
      </div>
    </div>
  );
}

/* ---------- Status bar ---------- */

function StatusBar() {
  return (
    <div className={`flex h-[20px] shrink-0 items-center border-t border-[#a9a9a9] bg-linear-to-b from-[#e2e2e2] to-[#d4d4d4] text-[10px] text-[#666] ${UI}`}>
      <span className="mb-px ml-[20px] flex-1">Ready</span>
      <span className="flex h-full w-[31px] items-center justify-center bg-[#a8a8a8]">
        <Ic w={11} h={11}><path d="M.5.500h10v10H.500ZM.5 3.800h10M.5 7.200h10M3.800.500v10M7.200.500v10" stroke="#fff" strokeWidth="1.200" /></Ic>
      </span>
      <Ic w={12} h={11} cls="ml-[9px]"><path d="M.5.500h11v10H.500ZM3 2.500h6v6.200H3ZM4.500 4.300h3M4.500 5.800h3M4.500 7.200h3" stroke="#777" /></Ic>
      <Ic w={12} h={11} cls="ml-[18px]"><path d="M.5.500h11v10H.500ZM3.500.500v5.500h8M7.500.500V6" stroke="#777" /></Ic>
      <span className="ml-[16px] h-[1.500px] w-[6px] bg-[#666]" />
      <span className="ml-[6px] flex h-[3px] w-[84px] items-center justify-center rounded-full bg-[#a0a0a0]"><span className="size-[13px] shrink-0 rounded-full bg-white shadow-[0_0_2px_rgba(0,0,0,0.400)]" /></span>
      <Ic w={7} h={7} cls="ml-[6px]"><path d="M3.500 0v7M0 3.500h7" stroke="#555" strokeWidth="1.500" /></Ic>
      <span className="mb-px ml-[14px] w-[46px]">100%</span>
    </div>
  );
}

export default function App() {
  return (
    <div className="h-[768px] w-[1366px] overflow-hidden bg-white pl-[47px] pt-[32px]">
      <div className="flex h-[675px] w-[1272px] flex-col overflow-hidden rounded-[9px] bg-[#f1f1f1] shadow-[0_0_2px_rgba(0,0,0,0.300),0_16px_32px_rgba(0,0,0,0.420)]">
        <TitleBar />
        <RibbonTabs />
        <Ribbon />
        <FormulaBar />
        <div className="flex min-h-0 flex-1">
          <div className="flex min-w-0 flex-1 flex-col">
            <Sheet />
            <SheetTabs />
          </div>
          <Pane />
        </div>
        <StatusBar />
      </div>
    </div>
  );
}
